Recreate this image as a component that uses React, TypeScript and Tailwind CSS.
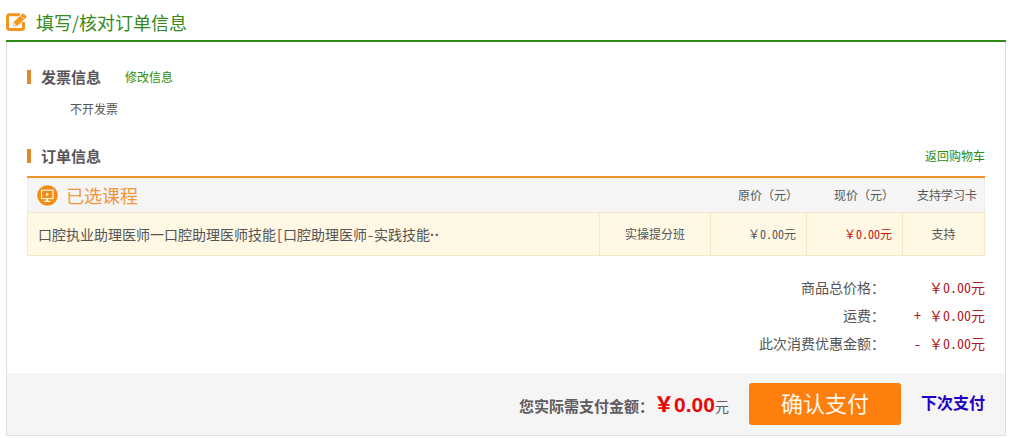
import type { ReactNode } from "react";

function EditIcon() {
  return (
    <svg width="22" height="20" viewBox="0 0 22 20" fill="none" aria-hidden="true">
      <path
        d="M14 2.7H3.2a1.7 1.7 0 0 0-1.7 1.7v11.4a1.7 1.7 0 0 0 1.7 1.7h12.6a1.7 1.7 0 0 0 1.7-1.7V10"
        stroke="#f7941d"
        strokeWidth="3"
      />
      <path
        d="M6.4 14.6l1.3-5 8.6-8.2q.8-.7 1.6 0l2.7 2.5q.8.8 0 1.6l-8.8 8.4z"
        fill="#f7941d"
        stroke="#fff"
        strokeWidth="0.9"
      />
      <path d="M14.3 3.6l3.8 3.7" stroke="#fff" strokeWidth="0.8" />
      <path d="M8 11l2 2-2.1.6z" fill="#fff" />
    </svg>
  );
}

function CourseIcon() {
  return (
    <svg width="21" height="21" viewBox="0 0 21 21" fill="none" aria-hidden="true">
      <circle cx="10.5" cy="10.5" r="10.3" fill="#f28c13" />
      <rect x="4.5" y="5.2" width="11.5" height="8.4" stroke="#fff" strokeWidth="1.1" />
      <path d="M9.2 7.6v3.6l2.8-1.8z" fill="#fff" />
      <path d="M10.3 13.5v2.5M7.3 16.3h6" stroke="#fff" strokeWidth="1.3" />
    </svg>
  );
}

function SectionTitle({ children }: { children: ReactNode }) {
  return (
    <h2 className="flex items-center gap-2.5 text-[15px] leading-6 font-bold text-[#5a565c]">
      <span className="h-3.5 w-1 bg-[#e08a2a]" />
      {children}
    </h2>
  );
}

// latin characters on half-width cells
function Half({ children }: { children: ReactNode }) {
  return <span className="[font-feature-settings:'hwid']">{children}</span>;
}

function Price() {
  return (
    <>
      ￥<Half>0.00</Half>元
    </>
  );
}

const totals = [
  { label: "商品总价格：", sign: "" },
  { label: "运费：", sign: "+" },
  { label: "此次消费优惠金额：", sign: "-" },
];

export default function App() {
  return (
    <main className="mr-[5px] ml-1.5 font-['Noto_Sans_CJK_SC',sans-serif] text-xs text-[#555]">
      <header className="flex h-[42px] items-center gap-2 border-b-2 border-[#2f8a1a] pt-1">
        <EditIcon />
        <h1 className="text-lg leading-6 text-[#368a1c]">填写/核对订单信息</h1>
      </header>

      <div className="border-x border-b border-[#dedede]">
        <div className="px-5 pt-[23px] pb-4">
          {/* invoice */}
          <section>
            <div className="flex items-center gap-6">
              <SectionTitle>发票信息</SectionTitle>
              <a href="#invoice" className="leading-6 text-[#2f8a0d]">修改信息</a>
            </div>
            <p className="mt-2 pl-[43px] leading-6">不开发票</p>
          </section>

          {/* order */}
          <section className="mt-[23px]">
            <div className="flex items-center justify-between">
              <SectionTitle>订单信息</SectionTitle>
              <a href="#cart" className="leading-6 text-[#2f8a0d]">返回购物车</a>
            </div>

            <table className="mt-2 w-full table-fixed border-separate border-spacing-0 border-t-2 border-[#f09428]">
              <thead className="bg-[#f5f5f5]">
                <tr className="h-[34px]">
                  <th className="border-l border-[#ececec] pl-[9px] text-left font-normal">
                    <span className="flex items-center gap-2 text-lg leading-6 text-[#f3953a]">
                      <CourseIcon />
                      已选课程
                    </span>
                  </th>
                  <th className="w-[111px]" />
                  <th className="w-24 pr-2 text-right font-normal">原价（元）</th>
                  <th className="w-24 pr-2 text-right font-normal">现价（元）</th>
                  <th className="w-[83px] border-r border-[#ececec] pr-[7px] text-right font-normal">支持学习卡</th>
                </tr>
              </thead>
              <tbody className="bg-[#fff8e5]">
                <tr className="h-11">
                  <td className="border-y border-l border-[#f7e6c4] pl-2.5 text-sm">
                    口腔执业助理医师一口腔助理医师技能<Half>[</Half>口腔助理医师<Half>-</Half>实践技能
                    <span className="font-['Liberation_Sans'] font-bold">··</span>
                  </td>
                  <td className="border-y border-l border-[#f7e6c4] text-center">实操提分班</td>
                  <td className="border-y border-l border-[#f7e6c4] pr-2.5 text-right"><Price /></td>
                  <td className="border-y border-l border-[#f7e6c4] pr-2.5 text-right text-[#c5160c]"><Price /></td>
                  <td className="border border-[#f7e6c4] text-center">支持</td>
                </tr>
              </tbody>
            </table>
          </section>

          <dl className="mt-[17px] text-sm">
            {totals.map((row) => (
              <div key={row.label} className="flex justify-end leading-7">
                <dt>{row.label}</dt>
                <dd className="flex w-[100px] justify-end gap-2 text-[#b0191c]">
                  <Half>{row.sign}</Half>
                  <span><Price /></span>
                </dd>
              </div>
            ))}
          </dl>
        </div>

        <footer className="flex items-center justify-end bg-[#f5f5f5] py-2.5 pr-5">
          <p className="pt-0.5 text-[15px] leading-6 font-bold text-[#5f5b60]">
            您实际需支付金额：
            <strong className="text-xl leading-6 text-[#e60a0a]">
              ￥<span className="font-['Liberation_Sans'] text-[21px]">0.00</span>
            </strong>
            <span className="text-sm font-normal">元</span>
          </p>
          <button
            type="button"
            className="ml-5 h-[42px] w-[152px] rounded-[3px] bg-[#ff7f0e] pb-1 text-[22px] leading-8 text-[#fff8ec]"
          >
            确认支付
          </button>
          <a href="#later" className="ml-5 pb-1 text-base leading-6 font-bold text-[#1f00c4]">下次支付</a>
        </footer>
      </div>
    </main>
  );
}
